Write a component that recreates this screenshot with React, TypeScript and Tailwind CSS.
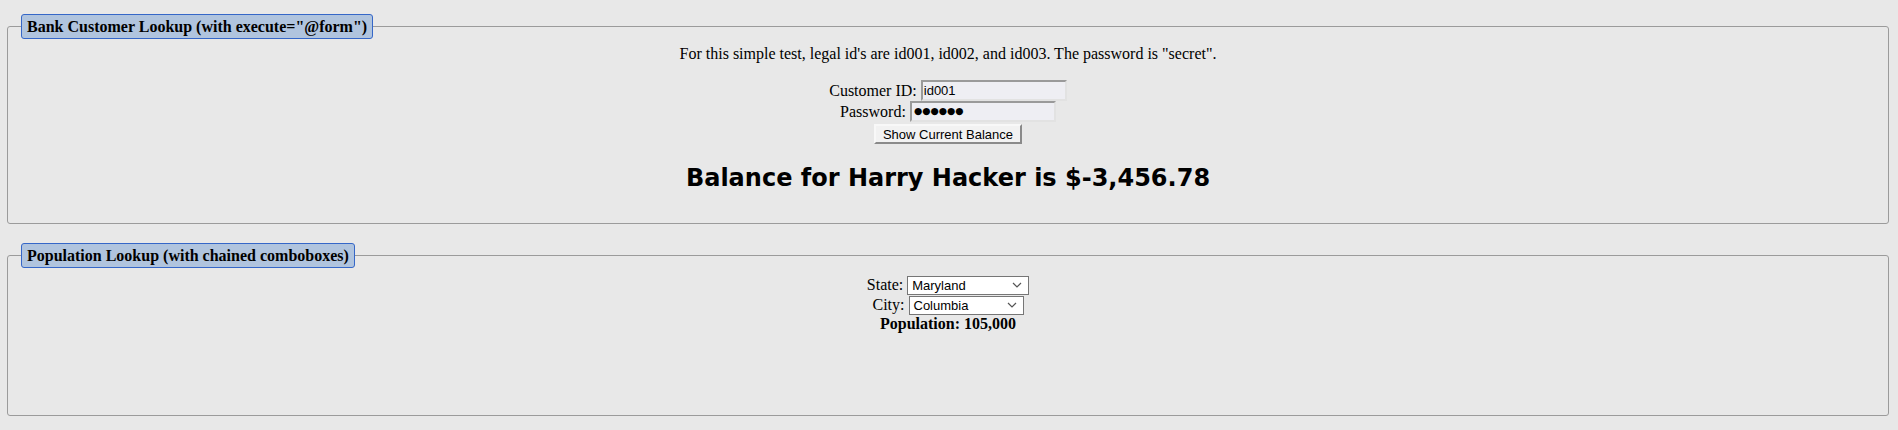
import React from "react";

function Chevron() {
  return (
    <svg width="10" height="6" viewBox="0 0 10 6" className="shrink-0">
      <path d="M1 1 L5 5 L9 1" fill="none" stroke="#555" strokeWidth="1.2" />
    </svg>
  );
}

function FakeSelect({ value, width }: { value: string; width: string }) {
  return (
    <span
      className={`inline-flex items-center justify-between h-[19px] bg-white border border-[#767676] pl-[4px] pr-[6px] align-middle font-['Liberation_Sans',sans-serif] text-[13px] leading-none text-black ${width}`}
    >
      <span>{value}</span>
      <Chevron />
    </span>
  );
}

export default function App() {
  return (
    <div className="min-h-[430px] bg-[#e8e8e8] pt-[14px] pl-[7px] pr-[9px] pb-[14px] font-['Liberation_Serif',serif] text-[16px] text-black">
      <fieldset className="border border-[#9b9b9b] rounded-[3px] pb-[31px]">
        <legend className="ml-[13px] bg-[#b0c4de] border border-[#3567c8] rounded-[3px] px-[5px] leading-[23px] font-bold">
          Bank Customer Lookup (with execute="@form")
        </legend>
        <div className="mt-[6px] text-center leading-[18px]">
          For this simple test, legal id's are id001, id002, and id003. The password is "secret".
        </div>
        <div className="mt-[17px] flex flex-col items-center">
          <div className="h-[21px] flex items-center">
            <span className="mr-[4px]">Customer ID:</span>
            <span className="inline-flex items-center w-[146px] h-[21px] bg-[#eeeef3] border-2 border-t-[#9a9a9a] border-l-[#9a9a9a] border-b-[#e2e2e2] border-r-[#e2e2e2] pl-[1px] font-['Liberation_Sans',sans-serif] text-[13px]">
              id001
            </span>
          </div>
          <div className="h-[21px] flex items-center">
            <span className="mr-[4px]">Password:</span>
            <span className="inline-flex items-center w-[146px] h-[21px] bg-[#eeeef3] border-2 border-t-[#9a9a9a] border-l-[#9a9a9a] border-b-[#e2e2e2] border-r-[#e2e2e2] pl-[2px] font-['DejaVu_Sans',sans-serif] text-[9.5px] tracking-[0px]">
              ●●●●●●
            </span>
          </div>
          <div className="h-[22px] flex items-end">
            <button className="h-[20px] w-[148px] bg-[#f2f2f2] border-2 border-t-[#f8f8f8] border-l-[#f8f8f8] border-b-[#8a8a8a] border-r-[#8a8a8a] font-['Liberation_Sans',sans-serif] text-[13px] leading-none">
              Show Current Balance
            </button>
          </div>
        </div>
        <h2 className="mt-[20px] text-center leading-[28px] text-[24px] font-bold font-['DejaVu_Sans',sans-serif]">
          Balance for Harry Hacker is $-3,456.78
        </h2>
      </fieldset>

      <fieldset className="mt-[19px] border border-[#9b9b9b] rounded-[3px] pb-[82px]">
        <legend className="ml-[13px] bg-[#b0c4de] border border-[#3567c8] rounded-[3px] px-[5px] leading-[23px] font-bold">
          Population Lookup (with chained comboboxes)
        </legend>
        <div className="mt-[7px] flex flex-col items-center">
          <div className="h-[20px] flex items-center">
            <span className="mr-[4px]">State:</span>
            <FakeSelect value="Maryland" width="w-[122px]" />
          </div>
          <div className="h-[20px] flex items-center">
            <span className="mr-[4px]">City:</span>
            <FakeSelect value="Columbia" width="w-[115px]" />
          </div>
          <div className="leading-[18px] font-bold">Population: 105,000</div>
        </div>
      </fieldset>
    </div>
  );
}
